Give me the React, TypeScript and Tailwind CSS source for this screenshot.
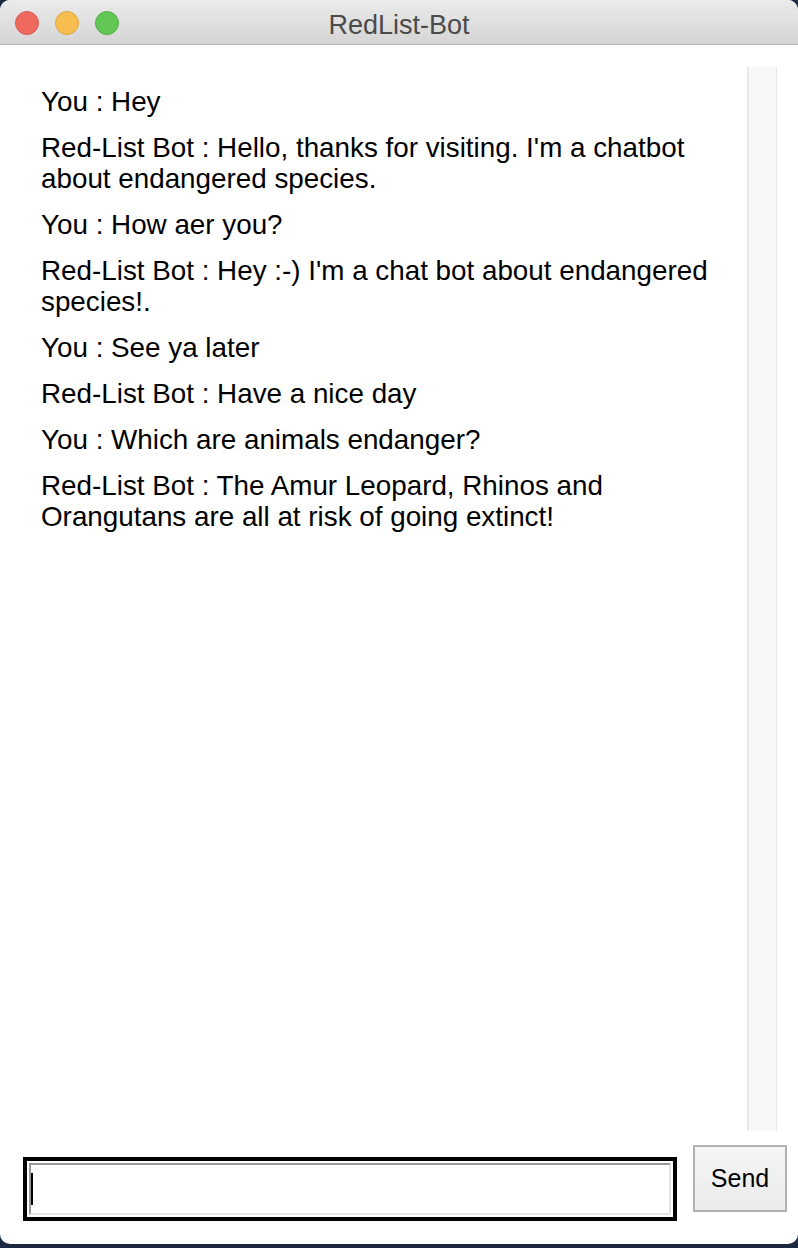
import React from 'react';

const messages: string[][] = [
    ['You : Hey'],
    ["Red-List Bot : Hello, thanks for visiting. I'm a chatbot", 'about endangered species.'],
    ['You : How aer you?'],
    ["Red-List Bot : Hey :-) I'm a chat bot about endangered", 'species!.'],
    ['You : See ya later'],
    ['Red-List Bot : Have a nice day'],
    ['You : Which are animals endanger?'],
    ['Red-List Bot : The Amur Leopard, Rhinos and', 'Orangutans are all at risk of going extinct!'],
];

const App: React.FC = () => {
    return (
        <div className="w-[798px] h-[1248px] bg-[#1b2942] overflow-hidden" style={{ fontFamily: '"Liberation Sans", Arial, sans-serif' }}>
            <div className="h-[1244px] bg-white rounded-[10px] overflow-hidden flex flex-col">
                {/* title bar */}
                <div className="relative h-[45px] shrink-0 bg-gradient-to-b from-[#ebebeb] to-[#d5d5d5] border-b border-[#b4b4b4] flex items-center">
                    <div className="flex gap-[16px] pl-[15px] pt-[2px]">
                        <span className="w-[24px] h-[24px] rounded-full bg-[#ee6a5f] border border-[#d95a50]" />
                        <span className="w-[24px] h-[24px] rounded-full bg-[#f6be4f] border border-[#dea63f]" />
                        <span className="w-[24px] h-[24px] rounded-full bg-[#62c655] border border-[#52ae45]" />
                    </div>
                    <div className="absolute inset-0 pt-[6px] flex items-center justify-center text-[27px] text-[#4b4b4b]">
                        RedList-Bot
                    </div>
                </div>

                {/* chat area */}
                <div className="flex-1 flex min-h-0">
                    <div className="flex-1 pl-[41px] pt-[41px] text-[27.8px] leading-[31px] text-black flex flex-col gap-[15px]">
                        {messages.map((lines, i) => (
                            <div key={i}>
                                {lines.map((l, j) => (
                                    <div key={j} className="whitespace-nowrap">{l}</div>
                                ))}
                            </div>
                        ))}
                    </div>
                    <div className="w-[30px] mt-[22px] mr-[21px] bg-[#f8f8f8] border-l-2 border-r border-[#e8e8e8]" />
                </div>

                {/* input row */}
                <div className="h-[113px] shrink-0 flex items-start">
                    <div className="ml-[23px] mt-[26px] w-[654px] h-[64px] border-4 border-black p-[2px]">
                        <div className="h-full border-2 border-t-[#999999] border-l-[#999999] border-b-[#e3e3e3] border-r-[#e3e3e3] flex items-center">
                            <span className="w-[2px] h-[32px] bg-black" />
                        </div>
                    </div>
                    <button className="ml-[16px] mt-[14px] w-[94px] h-[67px] border-2 border-[#b2b2b2] bg-gradient-to-b from-[#f5f5f5] to-[#ebebeb] text-[25px] text-black">
                        Send
                    </button>
                </div>
            </div>
        </div>
    );
};

export default App;
